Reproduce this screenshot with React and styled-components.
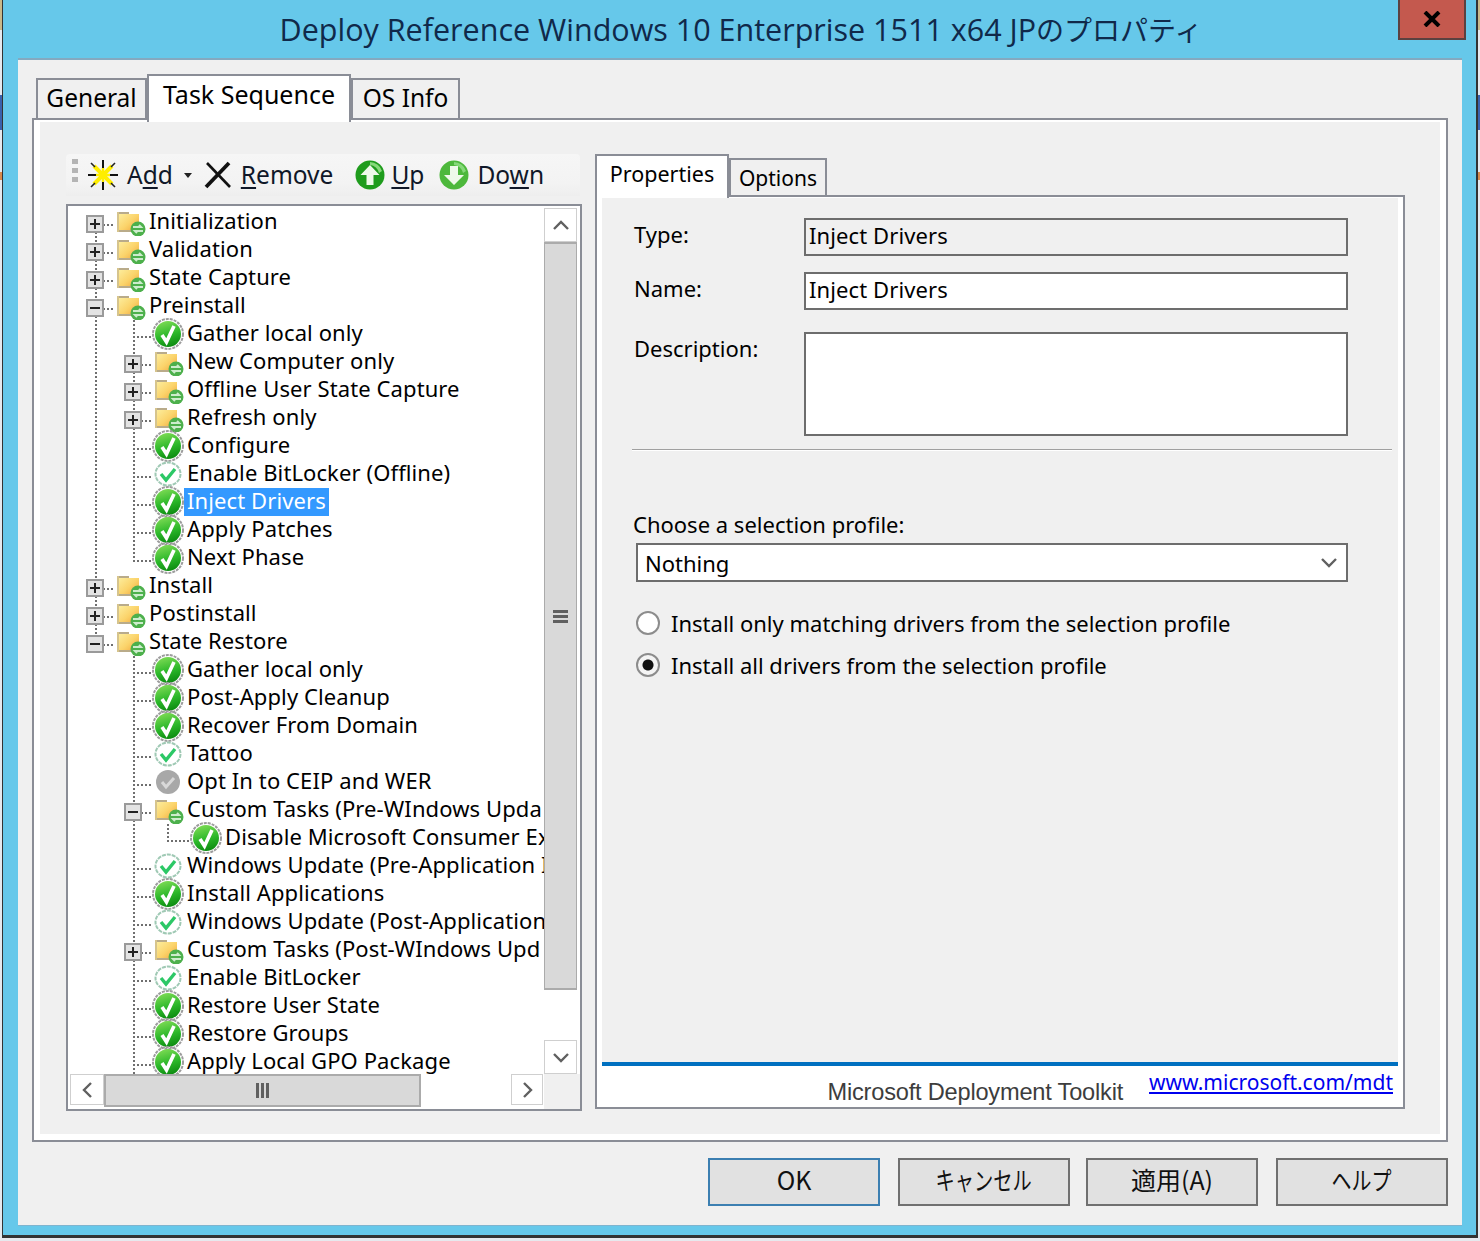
import React from 'react';
import styled, { createGlobalStyle, css } from 'styled-components';

const UI_FONT = `"Noto Sans", "Noto Sans CJK JP", sans-serif`;
const BORDER = '#8a8d96';

const GlobalStyle = createGlobalStyle`
  html, body { margin: 0; padding: 0; }
  body {
    width: 1480px;
    height: 1241px;
    overflow: hidden;
    background: linear-gradient(to bottom, #c9b98a 0 30px, #e6e9ee 30px 95px, #3b62ad 95px 130px, #e6e9ee 130px 172px, #d98a4a 172px 180px, #e6e9ee 180px);
    font-family: ${UI_FONT};
    color: #000;
  }
  * { box-sizing: border-box; }
`;

const Win = styled.div`
  margin-left: 2px;
  width: 1476px;
  height: 1238px;
  background: #66c8ea;
  border-left: 1px solid #333;
  border-right: 2px solid #333;
  border-bottom: 3px solid #333;
  display: flex;
  flex-direction: column;
`;

const TitleBar = styled.div`
  height: 58px;
  flex: none;
  display: flex;
  padding-left: 15px;
`;

const Title = styled.div`
  width: 1444px;
  padding-left: 2px;
  text-align: center;
  font-family: "Open Sans", "Noto Sans CJK JP", sans-serif;
  font-size: 30.5px;
  line-height: 58px;
  color: #10294a;
  white-space: nowrap;
`;

const TitleKana = styled.span`
  font-size: 28px;
`;

const CloseBtn = styled.div`
  margin-left: -64px;
  width: 68px;
  height: 40px;
  background: #c4594e;
  border: 2px solid #5b4140;
  border-top: none;
  display: flex;
  align-items: center;
  justify-content: center;
  flex: none;
`;

const Client = styled.div`
  margin-left: 15px;
  width: 1444px;
  height: 1167px;
  background: #f0f0f0;
  border-top: 2px solid #84a9c0;
  padding: 14px 14px 0;
  box-shadow: 0 1px 0 #7fb4cf;
`;

const TabStrip = styled.div`
  display: flex;
  align-items: flex-start;
  height: ${(p) => p.$h}px;
  padding-left: ${(p) => p.$inset}px;
`;

const TabItem = styled.div`
  border: 2px solid ${BORDER};
  border-bottom: none;
  white-space: nowrap;
  flex: none;
  text-align: center;
  width: ${(p) => p.$w}px;
  height: ${(p) => p.$h}px;
  margin-top: ${(p) => p.$top || 0}px;
  font-size: ${(p) => p.$size}px;
  line-height: ${(p) => p.$line}px;
  background: ${(p) => (p.$active ? '#fff' : '#f0f0f0')};
  ${(p) => p.$active && css`
    position: relative;
    z-index: 2;
  `}
`;

const SheetFrame = styled.div`
  margin-top: -4px;
  height: 1024px;
  border: 2px solid ${BORDER};
  background: #fff;
  padding: 2px 6px 6px 6px;
`;

const Sheet = styled.div`
  height: 100%;
  background: #f0f0f0;
  padding: 32px 0 0 26px;
  display: grid;
  grid-template-columns: 516px 810px;
  column-gap: 13px;
  align-items: start;
`;

const LeftCol = styled.div`
  display: flex;
  flex-direction: column;
`;

const Toolbar = styled.div`
  height: 42px;
  margin-bottom: 8px;
  width: 514px;
  border-radius: 4px 4px 0 0;
  background: linear-gradient(to bottom, #f6f6f6, #f3f3f3 70%, #eeeeee);
  display: flex;
  align-items: center;
  padding-left: 6px;
  font-size: 24.5px;
`;

const Grip = styled.div`
  width: 6px;
  height: 24px;
  margin: -8px 10px 0 0;
  background: repeating-linear-gradient(to bottom, #b4b4b4 0 5px, transparent 5px 9px);
`;

const ToolButton = styled.div`
  display: flex;
  align-items: center;
  gap: ${(p) => p.$gap}px;
  margin-right: ${(p) => p.$after}px;
  white-space: nowrap;
  line-height: 40px;
  color: #101828;

  u { text-underline-offset: 3px; text-decoration-thickness: 2px; }
`;

const Caret = styled.span`
  margin-left: 2px;
  width: 0;
  height: 0;
  border-left: 4px solid transparent;
  border-right: 4px solid transparent;
  border-top: 5px solid #222;
`;

const TreeBox = styled.div`
  width: 516px;
  height: 907px;
  border: 2px solid ${BORDER};
  background: #fff;
  display: grid;
  grid-template-columns: 476px 1fr;
  grid-template-rows: 868px 1fr;
`;

const TreeView = styled.div`
  overflow: hidden;
  padding: 2px 0 0 8px;
`;

const Row = styled.div`
  display: flex;
  height: 28px;
  white-space: nowrap;
`;

const Cell = styled.div`
  width: 38px;
  flex: none;
  height: 28px;
  padding: 7px 0 0 10px;
  background-repeat: no-repeat;
  background-image:
    repeating-linear-gradient(to bottom, #6f6f6f 0 2px, transparent 2px 4px),
    repeating-linear-gradient(to right, #6f6f6f 0 2px, transparent 2px 4px);
  ${(p) => {
    const x = p.$x ?? 19;
    const hor = p.$branch ? `${38 - x}px 2px` : '0 0';
    const pos = `${x}px ${p.$line === 'bottom' ? 16 : 0}px, ${x}px 16px`;
    const ver = p.$line === 'top' ? '2px 17px' : p.$line === 'bottom' ? '2px 12px' : p.$line === 'full' ? '2px 28px' : '0 0';
    return css`
      background-size: ${ver}, ${hor};
      background-position: ${pos};
    `;
  }}
`;

const Expander = styled.div`
  width: 18px;
  height: 18px;
  border: 2px solid #9a9a9a;
  background-color: #e3e3e3;
  background-repeat: no-repeat;
  background-image: linear-gradient(#222, #222), linear-gradient(#222, #222);
  background-position: center, center;
  background-size: ${(p) => (p.$open ? '10px 2px, 0 0' : '10px 2px, 2px 10px')};
`;

const IconSlot = styled.div`
  width: 32px;
  height: 28px;
  flex: none;
  display: flex;
  align-items: center;
  justify-content: center;
`;

const NodeLabel = styled.span`
  display: block;
  height: 28px;
  padding: 0 3px;
  font-size: 22px;
  line-height: 25px;
  letter-spacing: 0.1px;
  ${(p) => p.$selected && css`
    background: #3399ff;
    color: #fff;
  `}
`;

const VBar = styled.div`
  display: flex;
  flex-direction: column;
  padding: 2px 3px 0 0;
`;

const HBar = styled.div`
  display: flex;
  padding: 0 1px 2px 2px;
`;

const Corner = styled.div`
  background: #f0f0f0;
`;

const ArrowBtn = styled.div`
  flex: none;
  width: ${(p) => p.$w}px;
  height: ${(p) => p.$h}px;
  background: #fff;
  border: 1px solid #cfcfcf;
  display: flex;
  align-items: center;
  justify-content: center;
`;

const Thumb = styled.div`
  flex: 0 0 ${(p) => p.$size}px;
  background: #d9d9d9;
  border: 1px solid #ababab;
  border-width: ${(p) => (p.$horizontal ? '2px 2px 2px 2px' : '2px 1px')};
  display: flex;
  flex-direction: ${(p) => (p.$horizontal ? 'row' : 'column')};
  align-items: center;
  justify-content: center;
  gap: 2px;
`;

const GripLine = styled.span`
  background: #606060;
  width: ${(p) => (p.$horizontal ? '3px' : '15px')};
  height: ${(p) => (p.$horizontal ? '15px' : '3px')};
`;

const Track = styled.div`
  flex: 1;
  background: #fff;
`;

const RightCol = styled.div`
  display: flex;
  flex-direction: column;
`;

const PropFrame = styled.div`
  margin-top: -3px;
  height: 914px;
  border: 2px solid ${BORDER};
  background: #fff;
  display: flex;
  flex-direction: column;
  padding: 1px 5px 0;
`;

const FormArea = styled.div`
  height: 868px;
  flex: none;
  background: #f0f0f0;
  border-bottom: 4px solid #0070c0;
  padding: 20px 0 0 32px;
`;

const FieldGrid = styled.div`
  display: grid;
  grid-template-columns: 170px 544px;
`;

const FieldLabel = styled.label`
  font-size: 22px;
  line-height: 33px;
`;

const TextBox = styled.div`
  height: ${(p) => p.$h}px;
  margin-bottom: ${(p) => p.$mb}px;
  border: 2px solid #6d6d6d;
  background: ${(p) => (p.$disabled ? '#f0f0f0' : '#fff')};
  padding-left: 3px;
  font-size: 22px;
  line-height: 31px;
  letter-spacing: 0.1px;
`;

const Separator = styled.div`
  margin: 13px 6px 0 -2px;
  height: 2px;
  background: linear-gradient(to bottom, #a0a0a0 50%, #fff 50%);
`;

const ProfileLabel = styled.div`
  margin-top: 59px;
  margin-left: -1px;
  font-size: 22px;
  line-height: 28px;
`;

const SelectBox = styled.div`
  margin: 5px 0 0 2px;
  width: 712px;
  height: 39px;
  border: 2px solid #6d6d6d;
  background: #fff;
  display: flex;
  align-items: center;
  justify-content: space-between;
  padding: 0 8px 0 7px;
  font-size: 22px;
`;

const RadioGroup = styled.div`
  margin: 27px 0 0 2px;
  display: flex;
  flex-direction: column;
  gap: 14px;
`;

const RadioRow = styled.div`
  display: flex;
  align-items: center;
  gap: 11px;
  height: 28px;
  font-size: 22px;
  white-space: nowrap;
`;

const Radio = styled.span`
  width: 24px;
  height: 24px;
  flex: none;
  border-radius: 50%;
  border: 2px solid #8c8c8c;
  background: ${(p) => (p.$on ? 'radial-gradient(circle, #111 0 5px, #f4f4f4 6px)' : '#fff')};
`;

const PropFooter = styled.div`
  flex: 1;
  overflow: hidden;
  display: flex;
  justify-content: flex-end;
  padding-right: 5px;
`;

const BrandText = styled.span`
  font-family: "Liberation Sans", sans-serif;
  font-size: 23.6px;
  line-height: 52px;
  color: #3d3d3d;
  letter-spacing: -0.2px;
`;

const MdtLink = styled.a`
  margin-left: 26px;
  font-size: 21px;
  line-height: 32px;
  height: 30px;
  color: #0000ee;
  text-decoration: underline;
`;

const ButtonRow = styled.div`
  margin-top: 16px;
  display: flex;
  justify-content: flex-end;
`;

const DialogButton = styled.div`
  width: 172px;
  height: 48px;
  margin-left: ${(p) => p.$before || 0}px;
  background: #e1e1e1;
  border: 2px solid ${(p) => (p.$primary ? '#3c7fb1' : '#707070')};
  font-family: "Noto Sans CJK JP", sans-serif;
  font-size: 25px;
  line-height: 39px;
  text-align: center;
  color: #111;
`;

const NarrowKana = styled.span`
  display: inline-block;
  transform: scaleX(${(p) => p.$x});
`;

/* icons */
const CheckSolid = () => (
  <svg width="32" height="32" viewBox="0 0 32 32">
    <defs>
      <linearGradient id="gs" x1="0.3" y1="0" x2="0.6" y2="1">
        <stop offset="0" stopColor="#7edb55" />
        <stop offset="0.55" stopColor="#2cb82a" />
        <stop offset="1" stopColor="#0c8a10" />
      </linearGradient>
    </defs>
    <circle cx="16" cy="16" r="15" fill="none" stroke="#9c9c9c" strokeWidth="2" strokeDasharray="3 1" />
    <circle cx="16" cy="16" r="13" fill="url(#gs)" />
    <path d="M10 17l4.500 7L22 8" fill="none" stroke="#fff" strokeWidth="3.6" />
  </svg>
);

const CheckLight = () => (
  <svg width="28" height="26" viewBox="0 0 28 26">
    <ellipse cx="14" cy="13" rx="12.5" ry="11.5" fill="#fff" stroke="#9fc9b4" strokeWidth="2" strokeDasharray="4 1" />
    <path d="M7 13l5 6 9-11" fill="none" stroke="#2cc866" strokeWidth="3.4" />
  </svg>
);

const CheckGrey = () => (
  <svg width="26" height="26" viewBox="0 0 26 26">
    <circle cx="13" cy="13" r="12" fill="#a8a8a8" />
    <path d="M7 13l4 5 8-9" fill="none" stroke="#d8d8d8" strokeWidth="3" />
  </svg>
);

const FolderIcon = () => (
  <svg width="32" height="28" viewBox="0 0 32 28">
    <defs>
      <linearGradient id="fd" x1="0" y1="0" x2="1" y2="1">
        <stop offset="0" stopColor="#fdf2a6" />
        <stop offset="0.55" stopColor="#fbd36a" />
        <stop offset="1" stopColor="#ef9f38" />
      </linearGradient>
    </defs>
    <path d="M3 4h12v2h10v18H3z" fill="url(#fd)" />
    <path d="M3 4h12v2H3zM3 22h22v2H3z" fill="#b9ab8a" />
    <path d="M3 4h2v20H3z" fill="#d6c48d" />
    <circle cx="24" cy="21" r="7.5" fill="#4db04c" />
    <path d="M19 19h8l-2-2M29 23h-8l2 2" fill="none" stroke="#cdeccd" strokeWidth="2" />
  </svg>
);

const StarIcon = () => (
  <svg width="30" height="30" viewBox="0 0 30 30">
    <path d="M6 6l18 18M24 6L6 24" stroke="#ffee00" strokeWidth="4" />
    <path d="M3 3l4 4M27 3l-4 4M3 27l4-4M27 27l-4-4" stroke="#222" strokeWidth="1.6" />
    <path d="M15 0v30M0 15h30" stroke="#111" strokeWidth="2" />
    <path d="M15 8v14M8 15h14" stroke="#ffee00" strokeWidth="2.5" />
  </svg>
);

const RemoveIcon = () => (
  <svg width="28" height="28" viewBox="0 0 28 28">
    <path d="M2 26L25 2" stroke="#111" strokeWidth="3.8" />
    <path d="M3 2l23 24" stroke="#111" strokeWidth="2.6" />
  </svg>
);

const ArrowCircle = ({ down }) => (
  <svg width="30" height="30" viewBox="0 0 30 30">
    <circle cx="15" cy="15" r="14.5" fill={down ? '#4db83c' : '#1f9c1d'} />
    <path d="M15 2a13 13 0 0 1 12 9l-3 2a10 10 0 0 0-9-8z" fill="#86d97a" />
    <path
      d={down ? 'M11 6h8v9h6l-10 10L5 15h6z' : 'M11.500 25h7v-10h6L15 5 5.500 15h6z'}
      fill="#eef9ea"
    />
  </svg>
);

const Chevron = ({ dir }) => {
  const paths = {
    up: 'M2 10l7-7 7 7',
    down: 'M2 3l7 7 7-7',
    left: 'M10 1l-7 7 7 7',
    right: 'M3 1l7 7-7 7',
  };
  const vertical = dir === 'up' || dir === 'down';
  return (
    <svg width={vertical ? 18 : 13} height={vertical ? 13 : 16} viewBox={vertical ? '0 0 18 13' : '0 0 13 16'}>
      <path d={paths[dir]} fill="none" stroke="#606060" strokeWidth="2.4" />
    </svg>
  );
};

const ICONS = { f: FolderIcon, s: CheckSolid, l: CheckLight, g: CheckGrey };

const top = (t, extra) => ({ level: 0, icon: 'f', t, exp: '+', ...extra });

const TREE = [
  top('Initialization', { line0: 'bottom' }),
  top('Validation'),
  top('State Capture'),
  top('Preinstall', { exp: '-' }),
  { level: 1, g0: true, icon: 's', t: 'Gather local only' },
  { level: 1, g0: true, icon: 'f', t: 'New Computer only', exp: '+' },
  { level: 1, g0: true, icon: 'f', t: 'Offline User State Capture', exp: '+' },
  { level: 1, g0: true, icon: 'f', t: 'Refresh only', exp: '+' },
  { level: 1, g0: true, icon: 's', t: 'Configure' },
  { level: 1, g0: true, icon: 'l', t: 'Enable BitLocker (Offline)' },
  { level: 1, g0: true, icon: 's', t: 'Inject Drivers', selected: true },
  { level: 1, g0: true, icon: 's', t: 'Apply Patches' },
  { level: 1, g0: true, icon: 's', t: 'Next Phase', last: true },
  top('Install'),
  top('Postinstall'),
  top('State Restore', { exp: '-', line0: 'top' }),
  { level: 1, icon: 's', t: 'Gather local only' },
  { level: 1, icon: 's', t: 'Post-Apply Cleanup' },
  { level: 1, icon: 's', t: 'Recover From Domain' },
  { level: 1, icon: 'l', t: 'Tattoo' },
  { level: 1, icon: 'g', t: 'Opt In to CEIP and WER' },
  { level: 1, icon: 'f', t: 'Custom Tasks (Pre-WIndows Upda', exp: '-' },
  { level: 2, icon: 's', t: 'Disable Microsoft Consumer Ex' },
  { level: 1, icon: 'l', t: 'Windows Update (Pre-Application I' },
  { level: 1, icon: 's', t: 'Install Applications' },
  { level: 1, icon: 'l', t: 'Windows Update (Post-Application' },
  { level: 1, icon: 'f', t: 'Custom Tasks (Post-WIndows Upd', exp: '+' },
  { level: 1, icon: 'l', t: 'Enable BitLocker' },
  { level: 1, icon: 's', t: 'Restore User State' },
  { level: 1, icon: 's', t: 'Restore Groups' },
  { level: 1, icon: 's', t: 'Apply Local GPO Package' },
];

const TreeRow = ({ node }) => {
  const Icon = ICONS[node.icon];
  const toggle = node.exp ? <Expander $open={node.exp === '-'} /> : null;
  return (
    <Row>
      {node.level === 0 && (
        <Cell $line={node.line0 || 'full'} $branch>{toggle}</Cell>
      )}
      {node.level === 1 && (
        <>
          <Cell $line={node.g0 ? 'full' : undefined} />
          <Cell $line={node.last ? 'top' : 'full'} $branch>{toggle}</Cell>
        </>
      )}
      {node.level === 2 && (
        <>
          <Cell />
          <Cell $line="full" />
          <Cell $line="top" $x={15} $branch />
        </>
      )}
      <IconSlot><Icon /></IconSlot>
      <NodeLabel $selected={node.selected}>{node.t}</NodeLabel>
    </Row>
  );
};

export default function App() {
  return (
    <>
      <GlobalStyle />
      <Win>
        <TitleBar>
          <Title>Deploy Reference Windows 10 Enterprise 1511 x64 JP<TitleKana>のプロパティ</TitleKana></Title>
          <CloseBtn>
            <svg width="18" height="16" viewBox="0 0 18 16">
              <path d="M2 1l14 14M16 1L2 15" stroke="#000" strokeWidth="4" />
            </svg>
          </CloseBtn>
        </TitleBar>
        <Client>
          <TabStrip $h={48} $inset={4}>
            <TabItem $w={111} $h={40} $top={4} $size={24.5} $line={36}>General</TabItem>
            <TabItem $w={204} $h={48} $size={25} $line={37} $active>Task Sequence</TabItem>
            <TabItem $w={109} $h={40} $top={4} $size={24.5} $line={36}>OS Info</TabItem>
          </TabStrip>
          <SheetFrame>
            <Sheet>
              <LeftCol>
                <Toolbar>
                  <Grip />
                  <ToolButton $gap={9} $after={12}>
                    <StarIcon />
                    <span>A<u>d</u>d</span>
                    <Caret />
                  </ToolButton>
                  <ToolButton $gap={9} $after={22}>
                    <RemoveIcon />
                    <span><u>R</u>emove</span>
                  </ToolButton>
                  <ToolButton $gap={6} $after={15}>
                    <ArrowCircle />
                    <span><u>U</u>p</span>
                  </ToolButton>
                  <ToolButton $gap={8} $after={0}>
                    <ArrowCircle down />
                    <span>Do<u>w</u>n</span>
                  </ToolButton>
                </Toolbar>
                <TreeBox>
                  <TreeView>
                    {TREE.map((node, i) => <TreeRow key={i} node={node} />)}
                  </TreeView>
                  <VBar>
                    <ArrowBtn $w={33} $h={34}><Chevron dir="up" /></ArrowBtn>
                    <Thumb $size={748}>
                      <GripLine /><GripLine /><GripLine />
                    </Thumb>
                    <Track />
                    <ArrowBtn $w={33} $h={34}><Chevron dir="down" /></ArrowBtn>
                  </VBar>
                  <HBar>
                    <ArrowBtn $w={34} $h={31}><Chevron dir="left" /></ArrowBtn>
                    <Thumb $horizontal $size={317}>
                      <GripLine $horizontal /><GripLine $horizontal /><GripLine $horizontal />
                    </Thumb>
                    <Track />
                    <ArrowBtn $w={32} $h={31}><Chevron dir="right" /></ArrowBtn>
                  </HBar>
                  <Corner />
                </TreeBox>
              </LeftCol>
              <RightCol>
                <TabStrip $h={44} $inset={0}>
                  <TabItem $w={134} $h={44} $size={21.5} $line={35} $active>Properties</TabItem>
                  <TabItem $w={98} $h={38} $top={4} $size={21} $line={36}>Options</TabItem>
                </TabStrip>
                <PropFrame>
                  <FormArea>
                    <FieldGrid>
                      <FieldLabel>Type:</FieldLabel>
                      <TextBox $h={38} $mb={16} $disabled>Inject Drivers</TextBox>
                      <FieldLabel>Name:</FieldLabel>
                      <TextBox $h={38} $mb={22}>Inject Drivers</TextBox>
                      <FieldLabel>Description:</FieldLabel>
                      <TextBox $h={104} $mb={0} />
                    </FieldGrid>
                    <Separator />
                    <ProfileLabel>Choose a selection profile:</ProfileLabel>
                    <SelectBox>
                      <span>Nothing</span>
                      <Chevron dir="down" />
                    </SelectBox>
                    <RadioGroup>
                      <RadioRow><Radio />Install only matching drivers from the selection profile</RadioRow>
                      <RadioRow><Radio $on />Install all drivers from the selection profile</RadioRow>
                    </RadioGroup>
                  </FormArea>
                  <PropFooter>
                    <BrandText>Microsoft Deployment Toolkit</BrandText>
                    <MdtLink href="#">www.microsoft.com/mdt</MdtLink>
                  </PropFooter>
                </PropFrame>
              </RightCol>
            </Sheet>
          </SheetFrame>
          <ButtonRow>
            <DialogButton $primary>OK</DialogButton>
            <DialogButton $before={18}><NarrowKana $x={0.77}>キャンセル</NarrowKana></DialogButton>
            <DialogButton $before={16}>適用(A)</DialogButton>
            <DialogButton $before={18}><NarrowKana $x={0.8}>ヘルプ</NarrowKana></DialogButton>
          </ButtonRow>
        </Client>
      </Win>
    </>
  );
}
